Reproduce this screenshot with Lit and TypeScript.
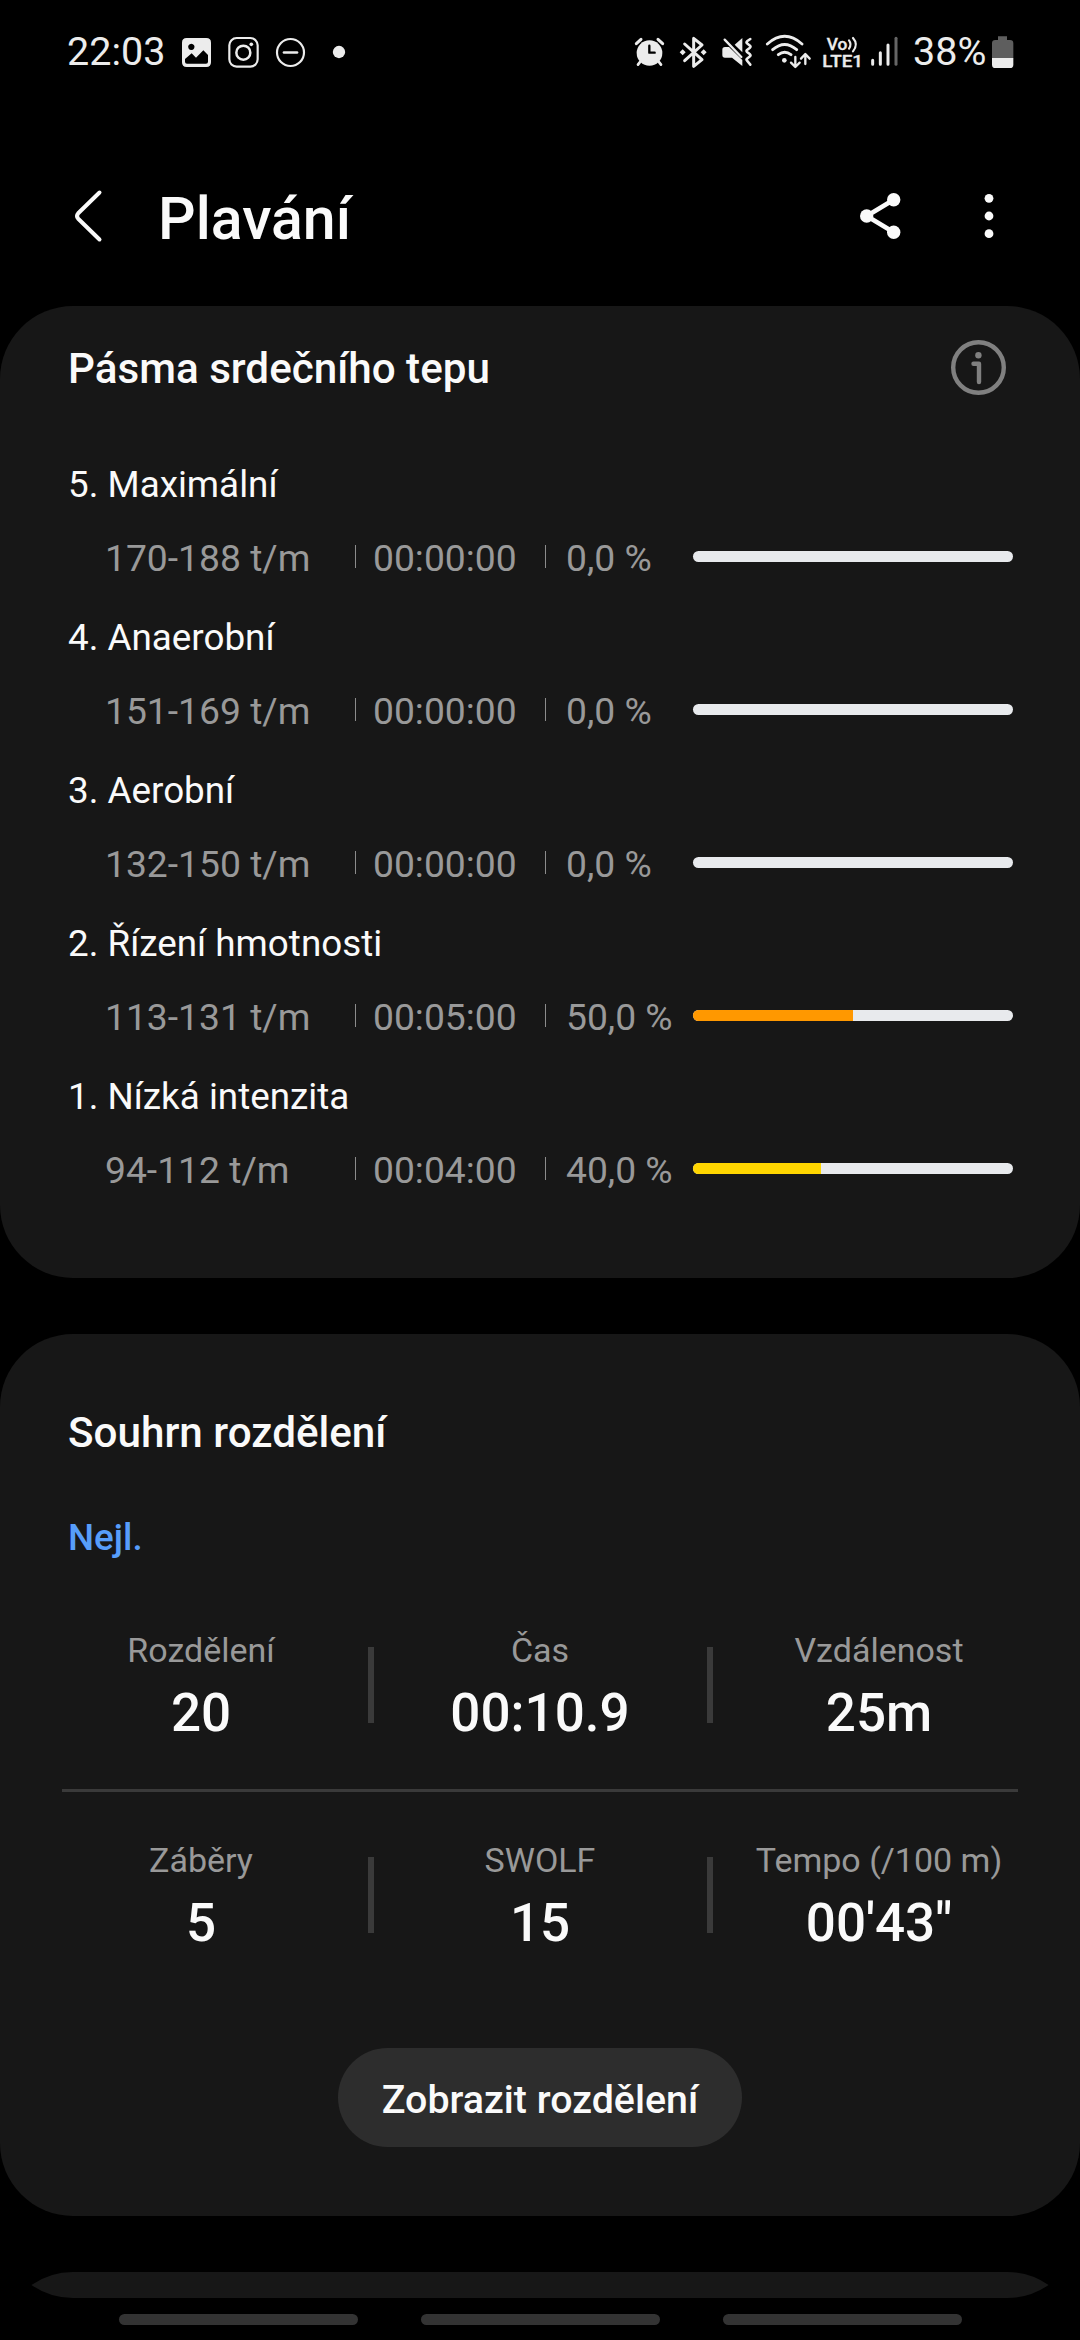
import { LitElement, html, css, svg } from "lit";
import { customElement, property } from "lit/decorators.js";

interface Zone {
  name: string;
  range: string;
  time: string;
  share: string;
  percent: number;
  tone: string;
}

interface Stat {
  label: string;
  value: string;
}

const ZONES: Zone[] = [
  { name: "5. Maximální", range: "170-188 t/m", time: "00:00:00", share: "0,0 %", percent: 0, tone: "none" },
  { name: "4. Anaerobní", range: "151-169 t/m", time: "00:00:00", share: "0,0 %", percent: 0, tone: "none" },
  { name: "3. Aerobní", range: "132-150 t/m", time: "00:00:00", share: "0,0 %", percent: 0, tone: "none" },
  { name: "2. Řízení hmotnosti", range: "113-131 t/m", time: "00:05:00", share: "50,0 %", percent: 50, tone: "orange" },
  { name: "1. Nízká intenzita", range: "94-112 t/m", time: "00:04:00", share: "40,0 %", percent: 40, tone: "yellow" },
];

const BEST_TOP: Stat[] = [
  { label: "Rozdělení", value: "20" },
  { label: "Čas", value: "00:10.9" },
  { label: "Vzdálenost", value: "25m" },
];

const BEST_BOTTOM: Stat[] = [
  { label: "Záběry", value: "5" },
  { label: "SWOLF", value: "15" },
  { label: "Tempo (/100 m)", value: "00'43\"" },
];

// Status icons share one vertical band, 132 units tall, three units per pixel.
const icon = (x: number, w: number, body: unknown) => html`
  <svg width=${w / 3} height="44" viewBox="${x} 60 ${w} 132" fill="none" stroke-linecap="round" stroke-linejoin="round">
    ${body}
  </svg>
`;

@customElement("status-bar")
export class StatusBar extends LitElement {
  static styles = css`
    :host {
      display: flex;
      justify-content: space-between;
      align-items: center;
      height: 104px;
      box-sizing: border-box;
      padding: 0 61px 0 67px;
      color: #ececec;
      font-size: 40px;
      line-height: 46px;
    }
    .group {
      display: flex;
      align-items: center;
    }
    svg {
      display: block;
      flex: none;
    }
    .time {
      width: 115px;
      margin-top: -1px;
      font-size: 39.500px;
    }
    .charge {
      width: 76px;
      padding-left: 9px;
      margin-top: -1px;
      font-size: 39.500px;
    }
    .net {
      font-family: Roboto, sans-serif;
      font-weight: 500;
    }
  `;

  render() {
    const c = "#ececec";
    return html`
      <div class="group">
        <span class="time">22:03</span>
        ${icon(426, 120, svg`
          <path fill=${c} fill-rule="evenodd" d="M440 84H499Q513 84 513 98V157Q513 171 499 171H440Q426 171 426 157V98Q426 84 440 84ZM454 101a9.500 9.500 0 1 0 .01 0ZM435 147V155Q435 161 441 161H498Q504 161 504 155V135L490 121L468 143L455 130Z"/>`)}
        ${icon(546, 144, svg`
          <rect x="568" y="84" width="85" height="86" rx="22" stroke=${c} stroke-width="6.500"/>
          <circle cx="610" cy="128" r="21" stroke=${c} stroke-width="7.500"/>
          <circle cx="634" cy="103" r="5.500" fill=${c}/>`)}
        ${icon(690, 150, svg`
          <circle cx="751.500" cy="127.500" r="40.500" stroke=${c} stroke-width="6.500"/>
          <path d="M732 127.500H771" stroke=${c} stroke-width="8"/>`)}
        ${icon(840, 90, svg`<circle cx="897" cy="126" r="18.500" fill=${c}/>`)}
      </div>
      <div class="group">
        ${icon(60, 126, svg`
          <circle cx="118.500" cy="129" r="38.500" fill=${c}/>
          <path d="M79 101L93 88M158 101L144 88" stroke=${c} stroke-width="9"/>
          <path d="M91 155L84 164M146 155L153 164" stroke=${c} stroke-width="8"/>
          <path d="M118 107V128H134" stroke="#000" stroke-width="7"/>`)}
        ${icon(186, 126, svg`
          <path d="M224 102L276 149L251 169V85L276 105L224 152" stroke=${c} stroke-width="9"/>
          <path d="M209 127L218 118L227 127L218 136ZM272 127L281 118L290 127L281 136Z" fill=${c}/>`)}
        ${icon(312, 138, svg`
          <path d="M337 119Q337 111 345 111H357L397 150V168L366 143H345Q337 143 337 135ZM374 104L397 84V127Z" fill=${c}/>
          <path d="M344 89L394 141" stroke=${c} stroke-width="7"/>
          <path d="M421 87L411 94Q408 97 411 100L420 107Q423 110 420 113L411 120Q408 123 411 126L420 133Q423 136 420 139L411 146Q408 149 411 152L421 164" stroke=${c} stroke-width="7.500"/>`)}
        ${icon(450, 171, svg`
          <path d="M472 102Q524 56 576 102M488 119Q524 88 560 119M505 134Q524 119 543 134" stroke=${c} stroke-width="8.500"/>
          <circle cx="523" cy="151" r="7" fill=${c}/>
          <path d="M556 141V169M543 158L556 171L569 158M586 162V133M573 146L586 132L599 146" stroke=${c} stroke-width="7"/>`)}
        ${icon(621, 147, svg`
          <text class="net" x="650" y="120" font-size="52" fill=${c} stroke=${c} stroke-width="1" textLength="62" lengthAdjust="spacingAndGlyphs">Vo</text>
          <path d="M717 91Q726 103 717 116M729 84Q746 103 729 124" stroke=${c} stroke-width="6.500"/>
          <text class="net" x="637" y="171" font-size="50" fill=${c} stroke=${c} stroke-width="1" textLength="122" lengthAdjust="spacingAndGlyphs">LTE1</text>`)}
        ${icon(768, 114, svg`
          <path d="M788 151V163M811 128V163M834 105V163" stroke=${c} stroke-width="9"/>
          <path d="M858 85V163" stroke="#666" stroke-width="9"/>`)}
        <span class="charge">38%</span>
        ${icon(1137, 90, svg`
          <path fill="#5e5e5e" d="M1164 79H1191V90H1200Q1210 90 1210 100V145H1146V100Q1146 90 1156 90H1164Z"/>
          <path fill=${c} d="M1146 144H1210V164Q1210 174 1200 174H1156Q1146 174 1146 164Z"/>`)}
      </div>
    `;
  }
}

@customElement("zone-row")
export class ZoneRow extends LitElement {
  static styles = css`
    :host {
      display: block;
      height: 153px;
    }
    .name {
      height: 74px;
      padding-left: 68px;
      font-size: 36.800px;
      line-height: 75px;
      color: #fafafa;
    }
    .detail {
      display: grid;
      grid-template-columns: 250px 1px 189px 1px 147px 320px;
      align-items: center;
      height: 75px;
      padding-left: 105px;
      font-size: 37.250px;
      line-height: 44px;
      color: #999;
      white-space: nowrap;
    }
    .range,
    .time,
    .share {
      padding-bottom: 2px;
    }
    .rule {
      height: 23px;
      margin-bottom: 4px;
      background: #8c8c8c;
    }
    .time {
      padding-left: 17px;
    }
    .share {
      padding-left: 20px;
    }
    .track {
      height: 11px;
      margin-bottom: 4px;
      border-radius: 6px;
      overflow: hidden;
      background: #e8eaed;
    }
    .fill {
      height: 100%;
    }
    .orange {
      background: #ff9800;
    }
    .yellow {
      background: #ffd600;
    }
  `;

  @property({ attribute: false }) zone!: Zone;

  render() {
    const z = this.zone;
    return html`
      <div class="name">${z.name}</div>
      <div class="detail">
        <span class="range">${z.range}</span>
        <div class="rule"></div>
        <span class="time">${z.time}</span>
        <div class="rule"></div>
        <span class="share">${z.share}</span>
        <div class="track"><div class="fill ${z.tone}" style="width:${z.percent}%"></div></div>
      </div>
    `;
  }
}

@customElement("stat-row")
export class StatRow extends LitElement {
  static styles = css`
    :host {
      display: grid;
      grid-template-columns: 333px 6px 333px 6px 333px;
      justify-content: center;
      align-items: center;
      height: 124px;
      text-align: center;
    }
    .label {
      padding-bottom: 2px;
      font-size: 34px;
      line-height: 50px;
      color: #999;
    }
    .value {
      font-size: 53px;
      font-weight: 500;
      line-height: 72px;
      color: #fafafa;
    }
    .bar {
      height: 76px;
      margin-bottom: 4px;
      background: #3a3a3a;
    }
  `;

  @property({ attribute: false }) stats: Stat[] = [];

  render() {
    return this.stats.map(
      (s, i) => html`
        ${i ? html`<div class="bar"></div>` : null}
        <div>
          <div class="label">${s.label}</div>
          <div class="value">${s.value}</div>
        </div>
      `
    );
  }
}

@customElement("app-root")
export class AppRoot extends LitElement {
  static styles = css`
    :host {
      display: block;
      height: 2340px;
      overflow: hidden;
      background: #000;
      font-family: Roboto, sans-serif;
    }
    svg {
      display: block;
      flex: none;
    }
    .header {
      display: flex;
      align-items: center;
      height: 112px;
      margin: 56px 0 34px;
      padding: 0 84px 0 68px;
    }
    .title {
      flex: 1;
      margin: 0;
      padding: 5px 0 0 50px;
      font-size: 59.060px;
      font-weight: 500;
      line-height: 68px;
      color: #fafafa;
    }
    .actions {
      display: flex;
      gap: 81px;
    }
    .card {
      border-radius: 73px;
      background: #171717;
    }
    .zones {
      height: 906px;
      padding-bottom: 66px;
    }
    .head {
      display: flex;
      justify-content: space-between;
      align-items: center;
      height: 124px;
      padding: 0 73px 17px 68px;
    }
    .head h2 {
      padding-top: 2px;
    }
    .info {
      margin-bottom: 1px;
    }
    h2 {
      margin: 0;
      font-size: 42.190px;
      font-weight: 500;
      line-height: 62px;
      color: #fafafa;
    }
    .splits {
      display: flex;
      flex-direction: column;
      height: 814px;
      box-sizing: content-box;
      margin-top: 56px;
      padding-top: 68px;
    }
    .splits h2,
    .best {
      padding-left: 68px;
    }
    .best {
      margin: 44px 0 57px;
      font-size: 36.800px;
      font-weight: 500;
      line-height: 60px;
      color: #579dfa;
    }
    .divider {
      height: 3px;
      margin: 40px 62px 43px;
      background: #3a3a3a;
    }
    .show {
      align-self: center;
      width: 404px;
      height: 99px;
      box-sizing: border-box;
      margin-top: 89px;
      padding: 4px 0 0;
      border: 0;
      border-radius: 50px;
      background: #2d2d2d;
      font-family: inherit;
      font-size: 39.375px;
      font-weight: 500;
      color: #fafafa;
    }
    .next {
      margin-top: 56px;
    }
    .nav {
      display: flex;
      justify-content: center;
      gap: 63px;
      margin-top: 16px;
    }
    .pill {
      width: 239px;
      height: 11px;
      border-radius: 6px;
      background: #333;
    }
  `;

  render() {
    return html`
      <status-bar></status-bar>
      <div class="header">
        <svg width="40" height="60" viewBox="68 186 40 60" fill="none" stroke="#fafafa" stroke-width="4" stroke-linecap="round" stroke-linejoin="round">
          <path d="M99.500 192.500L78.200 213.200Q75.800 216 78.200 218.800L99.500 239.500"/>
        </svg>
        <h1 class="title">Plavání</h1>
        <div class="actions">
          <svg width="41" height="48" viewBox="860 192 41 48" fill="#fafafa" stroke="#fafafa">
            <path d="M893.700 199.700L866.700 216L893.700 232.300" fill="none" stroke-width="4.600"/>
            <circle cx="866.700" cy="216" r="6.700" stroke="none"/>
            <circle cx="893.700" cy="199.700" r="6.700" stroke="none"/>
            <circle cx="893.700" cy="232.300" r="6.700" stroke="none"/>
          </svg>
          <svg width="14" height="48" viewBox="982 192 14 48" fill="#fafafa">
            <circle cx="989" cy="198.300" r="4.400"/>
            <circle cx="989" cy="216" r="4.400"/>
            <circle cx="989" cy="233.700" r="4.400"/>
          </svg>
        </div>
      </div>

      <div class="card zones">
        <div class="head">
          <h2>Pásma srdečního tepu</h2>
          <svg class="info" width="57" height="57" viewBox="950 339 57 57" fill="none" stroke="#808080" stroke-width="4.400" stroke-linecap="round" stroke-linejoin="round">
            <circle cx="978.500" cy="367.500" r="25.300"/>
            <circle cx="978.400" cy="355.300" r="3.200" fill="#808080" stroke="none"/>
            <path d="M973.500 363.700H979V382"/>
          </svg>
        </div>
        ${ZONES.map((z) => html`<zone-row .zone=${z}></zone-row>`)}
      </div>

      <div class="card splits">
        <h2>Souhrn rozdělení</h2>
        <div class="best">Nejl.</div>
        <stat-row .stats=${BEST_TOP}></stat-row>
        <div class="divider"></div>
        <stat-row .stats=${BEST_BOTTOM}></stat-row>
        <button class="show">Zobrazit rozdělení</button>
      </div>

      <svg class="next" width="1080" height="26" viewBox="0 0 1080 26" fill="#171717">
        <path d="M31.400 13A73 73 0 0 1 73 0H1007A73 73 0 0 1 1048.600 13A73 73 0 0 1 1007 26H73A73 73 0 0 1 31.400 13Z"/>
      </svg>
      <div class="nav">
        <div class="pill"></div>
        <div class="pill"></div>
        <div class="pill"></div>
      </div>
    `;
  }
}
